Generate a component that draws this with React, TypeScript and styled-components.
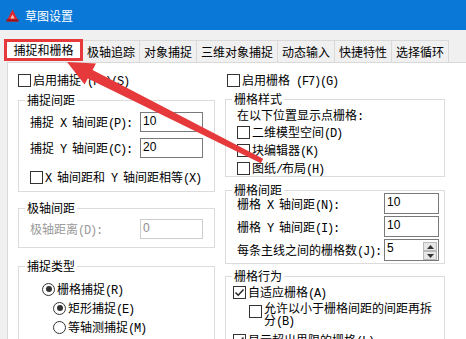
import styled, { createGlobalStyle, css } from 'styled-components'

const GlobalStyle = createGlobalStyle`
  html, body {
    margin: 0;
    padding: 0;
    background: #f0f0f0;
  }
`

const cjk = `"Noto Sans CJK SC", "Microsoft YaHei", sans-serif`

const Window = styled.div`
  position: relative;
  width: 466px;
  height: 339px;
  overflow: hidden;
  display: flex;
  flex-direction: column;
  background: #f0f0f0;
  font-family: ${cjk};
  font-size: 12px;
  color: #000;
`

const TitleBar = styled.div`
  flex: none;
  height: 30px;
  display: flex;
  align-items: center;
  gap: 6px;
  padding-left: 6px;
  background: #0a78d7;
  color: #fff;
`

const TabStrip = styled.div`
  flex: none;
  height: 32px;
  display: flex;
  align-items: flex-end;
  padding-left: 4px;
`

const Tab = styled.div<{ $active?: boolean }>`
  box-sizing: border-box;
  height: 22px;
  padding: 0 4px;
  line-height: 21px;
  white-space: nowrap;
  background: #f0f0f0;
  border-top: 1px solid #d9d9d9;
  border-right: 1px solid #d9d9d9;
  ${p =>
    p.$active &&
    css`
      width: 79px;
      margin-bottom: 1px;
      text-align: center;
      line-height: 16px;
      background: #fff;
      border: 3px solid #e5393b;
    `}
`

const Panel = styled.div`
  flex: 1;
  display: flex;
  gap: 10px;
  margin-left: 7px;
  padding: 9px 0 0 10px;
  background: #fff;
  border-top: 1px solid #d9d9d9;
  border-left: 1px solid #d9d9d9;
`

const Column = styled.div<{ $w: number }>`
  flex: none;
  width: ${p => p.$w}px;
  display: flex;
  flex-direction: column;
`

const Group = styled.fieldset<{ $mt: number }>`
  margin: ${p => p.$mt}px 0 0;
  padding: 0;
  min-width: 0;
  border: 1px solid #dcdcdc;
`

const Legend = styled.legend`
  margin-left: 6px;
  padding: 0 2px;
  font-size: 12px;
  line-height: 14px;
`

const GroupBody = styled.div<{ $pad: string; $gap?: number; $mt?: number }>`
  display: flex;
  flex-direction: column;
  gap: ${p => p.$gap ?? 0}px;
  margin-top: ${p => p.$mt ?? 0}px;
  padding: ${p => p.$pad};
`

const FieldRow = styled.div<{ $label: number; $gray?: boolean }>`
  display: grid;
  grid-template-columns: ${p => p.$label}px auto;
  align-items: center;
  line-height: 16px;
  white-space: nowrap;
  color: ${p => (p.$gray ? '#9a9a9a' : '#000')};
`

const TextBox = styled.div<{ $w: number; $h: number; $gray?: boolean }>`
  box-sizing: border-box;
  width: ${p => p.$w}px;
  height: ${p => p.$h}px;
  display: flex;
  justify-content: space-between;
  padding: 1px 1px 0 2px;
  border: 1px solid ${p => (p.$gray ? '#cccccc' : '#7a7a7a')};
  background: #fff;
  font-family: "Liberation Sans", Arial, sans-serif;
  font-size: 12px;
  line-height: 14px;
  color: ${p => (p.$gray ? '#8d8d8d' : '#000')};
`

const SpinButtons = styled.div`
  display: flex;
  flex-direction: column;
  margin-top: 1px;
`

const SpinButton = styled.div`
  box-sizing: border-box;
  width: 14px;
  height: 9px;
  display: grid;
  place-items: center;
  background: #e6e6e6;
  border: 1px solid #b9b9b9;
`

const CheckRow = styled.div<{ $indent?: number; $mt?: number; $wrap?: boolean }>`
  display: flex;
  align-items: ${p => (p.$wrap ? 'flex-start' : 'center')};
  gap: 2px;
  height: ${p => (p.$wrap ? 'auto' : '16px')};
  margin-left: ${p => p.$indent ?? 0}px;
  margin-top: ${p => p.$mt ?? 0}px;
  line-height: ${p => (p.$wrap ? '12px' : '16px')};
  white-space: ${p => (p.$wrap ? 'normal' : 'nowrap')};
`

const Box = styled.span<{ $round?: boolean; $wrap?: boolean }>`
  box-sizing: border-box;
  flex: none;
  width: 13px;
  height: 13px;
  margin-top: ${p => (p.$wrap ? 3 : 0)}px;
  display: grid;
  place-items: center;
  background: #fff;
  border: 1px solid #333;
  border-radius: ${p => (p.$round ? '50%' : '0')};
`

const Dot = styled.span`
  width: 6px;
  height: 6px;
  border-radius: 50%;
  background: #333;
`

const Label = styled.span<{ $w?: number }>`
  ${p => p.$w && `width: ${p.$w}px;`}
`

const TextLine = styled.div`
  height: 15px;
  line-height: 15px;
  white-space: nowrap;
`

const Latin = styled.span`
  font-family: "Liberation Mono", "Courier New", monospace;
  font-size: 12px;
  line-height: 1;
  letter-spacing: -1.2px;
  white-space: pre;
`

const Overlay = styled.svg`
  position: absolute;
  top: 0;
  left: 0;
  pointer-events: none;
`

const Mixed = ({ text }: { text: string }) => (
  <>
    {text
      .split(/([\x20-\x7e]+)/)
      .map((part, i) => (i % 2 ? <Latin key={i}>{part}</Latin> : part))}
  </>
)

const CheckMark = () => (
  <svg width="11" height="11" viewBox="0 0 11 11">
    <path d="M1.5 5.5 L4.2 8.2 L9.5 2.5" fill="none" stroke="#222" strokeWidth="1.4" />
  </svg>
)

type TCheck = {
  label: string
  checked?: boolean
  radio?: boolean
  indent?: number
  mt?: number
  wrap?: number
}

const Check = ({ label, checked, radio, indent, mt, wrap }: TCheck) => (
  <CheckRow $indent={indent} $mt={mt} $wrap={!!wrap}>
    <Box $round={radio} $wrap={!!wrap}>
      {checked && (radio ? <Dot /> : <CheckMark />)}
    </Box>
    <Label $w={wrap}>
      <Mixed text={label} />
    </Label>
  </CheckRow>
)

const Field = ({
  label,
  value,
  labelW,
  w,
  h = 20,
  gray,
}: {
  label: string
  value: string
  labelW: number
  w: number
  h?: number
  gray?: boolean
}) => (
  <FieldRow $label={labelW} $gray={gray}>
    <span>
      <Mixed text={label} />
    </span>
    <TextBox $w={w} $h={h} $gray={gray}>
      {value}
    </TextBox>
  </FieldRow>
)

const AppIcon = () => (
  <svg width="13" height="13" viewBox="0 0 13 13">
    <path d="M6.5 0.5 L12.5 12.5 H0.5 Z" fill="#e0262b" />
    <path d="M6.5 5.5 L8.6 9.6 H4.4 Z" fill="#f6c9c9" />
    <rect x="0.5" y="10.3" width="12" height="2.2" fill="#9e1518" />
  </svg>
)

const tabs = ['极轴追踪', '对象捕捉', '三维对象捕捉', '动态输入', '快捷特性', '选择循环']

export default function App() {
  return (
    <Window>
      <GlobalStyle />
      <TitleBar>
        <AppIcon />
        <span>草图设置</span>
      </TitleBar>

      <TabStrip>
        <Tab $active>捕捉和栅格</Tab>
        {tabs.map(t => (
          <Tab key={t}>{t}</Tab>
        ))}
      </TabStrip>

      <Panel>
        <Column $w={197}>
          <Check label="启用捕捉 (F9)(S)" />

          <Group $mt={5}>
            <Legend>捕捉间距</Legend>
            <GroupBody $pad="5px 0 6px 11px" $gap={6}>
              <Field label="捕捉 X 轴间距(P):" value="10" labelW={110} w={63} />
              <Field label="捕捉 Y 轴间距(C):" value="20" labelW={110} w={63} />
              <Check label="X 轴间距和 Y 轴间距相等(X)" mt={5} />
            </GroupBody>
          </Group>

          <Group $mt={9}>
            <Legend>极轴间距</Legend>
            <GroupBody $pad="4px 0 8px 11px">
              <Field label="极轴距离(D):" value="0" labelW={110} w={63} gray />
            </GroupBody>
          </Group>

          <Group $mt={11}>
            <Legend>捕捉类型</Legend>
            <GroupBody $pad="8px 0 8px 23px" $gap={3}>
              <Check radio checked label="栅格捕捉(R)" />
              <Check radio checked label="矩形捕捉(E)" indent={11} />
              <Check radio label="等轴测捕捉(M)" indent={11} />
            </GroupBody>
          </Group>
        </Column>

        <Column $w={220}>
          <Check label="启用栅格 (F7)(G)" indent={2} />

          <Group $mt={4}>
            <Legend>栅格样式</Legend>
            <GroupBody $pad="1px 0 0 11px" $gap={2}>
              <TextLine>
                <Mixed text="在以下位置显示点栅格:" />
              </TextLine>
              <Check label="二维模型空间(D)" />
              <Check label="块编辑器(K)" />
              <Check label="图纸/布局(H)" />
            </GroupBody>
          </Group>

          <Group $mt={6}>
            <Legend>栅格间距</Legend>
            <GroupBody $pad="0 0 2px 11px" $gap={2} $mt={-4}>
              <Field label="栅格 X 轴间距(N):" value="10" labelW={147} w={55} h={21} />
              <Field label="栅格 Y 轴间距(I):" value="10" labelW={147} w={55} h={21} />
              <FieldRow $label={147}>
                <span>
                  <Mixed text="每条主线之间的栅格数(J):" />
                </span>
                <TextBox $w={55} $h={22}>
                  5
                  <SpinButtons>
                    <SpinButton>
                      <svg width="7" height="4" viewBox="0 0 7 4">
                        <path d="M0 4 L3.5 0 L7 4 Z" fill="#333" />
                      </svg>
                    </SpinButton>
                    <SpinButton>
                      <svg width="7" height="4" viewBox="0 0 7 4">
                        <path d="M0 0 L3.5 4 L7 0 Z" fill="#333" />
                      </svg>
                    </SpinButton>
                  </SpinButtons>
                </TextBox>
              </FieldRow>
            </GroupBody>
          </Group>

          <Group $mt={5}>
            <Legend>栅格行为</Legend>
            <GroupBody $pad="1px 0 8px 7px">
              <Check checked label="自适应栅格(A)" />
              <Check label="允许以小于栅格间距的间距再拆分(B)" indent={16} mt={2} wrap={177} />
              <Check checked label="显示超出界限的栅格(L)" mt={4} />
            </GroupBody>
          </Group>
        </Column>
      </Panel>

      <Overlay width="466" height="339" viewBox="0 0 466 339">
        <polygon
          points="67,62 96,63.5 92.6,70 263.1,158.8 260.9,163.2 87.8,78.6 84.6,84.6"
          fill="#e5393b"
        />
      </Overlay>
    </Window>
  )
}
